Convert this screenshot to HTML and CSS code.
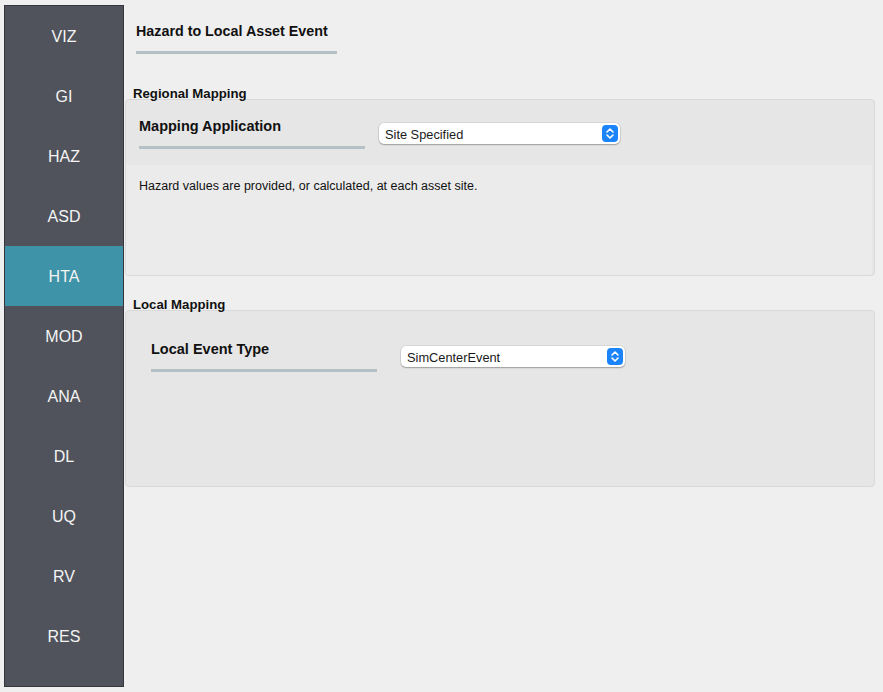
FILE: index.html
```html
<!DOCTYPE html>
<html>
<head>
<meta charset="utf-8">
<link rel="stylesheet" href="styles.css">
</head>
<body>
<div class="app">
  <nav class="sidebar">
    <div class="nav-item">VIZ</div>
    <div class="nav-item">GI</div>
    <div class="nav-item">HAZ</div>
    <div class="nav-item">ASD</div>
    <div class="nav-item active">HTA</div>
    <div class="nav-item">MOD</div>
    <div class="nav-item">ANA</div>
    <div class="nav-item">DL</div>
    <div class="nav-item">UQ</div>
    <div class="nav-item">RV</div>
    <div class="nav-item">RES</div>
  </nav>
  <main class="main">
    <div class="page-title">
      <div class="heading title-text">Hazard to Local Asset Event</div>
      <div class="bar title-bar"></div>
    </div>

    <div class="group regional">
      <div class="group-label">Regional Mapping</div>
      <div class="group-box">
        <div class="box-top">
          <div class="field">
            <div class="heading">Mapping Application</div>
            <div class="bar field-bar"></div>
          </div>
          <div class="combo combo-site">
            <span class="combo-text">Site Specified</span>
            <span class="stepper">
              <svg width="16" height="17" viewBox="0 0 16 17"><path d="M5 7 L8 4 L11 7 M5 10 L8 13 L11 10" fill="none" stroke="#fff" stroke-width="1.6" stroke-linecap="round" stroke-linejoin="round"/></svg>
            </span>
          </div>
        </div>
        <div class="box-bottom">
          <p class="desc">Hazard values are provided, or calculated, at each asset site.</p>
        </div>
      </div>
    </div>

    <div class="group local">
      <div class="group-label">Local Mapping</div>
      <div class="group-box local-box">
        <div class="local-row">
          <div class="field">
            <div class="heading">Local Event Type</div>
            <div class="bar field-bar"></div>
          </div>
          <div class="combo combo-event">
            <span class="combo-text">SimCenterEvent</span>
            <span class="stepper">
              <svg width="16" height="17" viewBox="0 0 16 17"><path d="M5 7 L8 4 L11 7 M5 10 L8 13 L11 10" fill="none" stroke="#fff" stroke-width="1.6" stroke-linecap="round" stroke-linejoin="round"/></svg>
            </span>
          </div>
        </div>
      </div>
    </div>
  </main>
</div>
</body>
</html>
```

FILE: styles.css
```css
* { box-sizing: border-box; }
html, body {
  margin: 0;
  padding: 0;
  background: #efefef;
  font-family: "Liberation Sans", Arial, sans-serif;
  color: #111;
}
.app {
  display: flex;
  align-items: flex-start;
  width: 883px;
  height: 692px;
}
.sidebar {
  margin: 5px 0 0 4px;
  width: 120px;
  height: 682px;
  background: #50535b;
  border: 1px solid #35373b;
  display: flex;
  flex-direction: column;
}
.nav-item {
  height: 60px;
  flex: none;
  display: flex;
  align-items: center;
  justify-content: center;
  padding-top: 2px;
  color: #f4f4f4;
  font-size: 16px;
}
.nav-item.active {
  background: #3f93a8;
}
.main {
  flex: none;
  width: 750px;
  margin-left: 1px;
  display: flex;
  flex-direction: column;
}
.heading {
  font-weight: bold;
  font-size: 14.5px;
  line-height: 16px;
  color: #111;
}
.title-text {
  font-size: 14.3px;
}
.bar {
  height: 3px;
  background: #b5c0c6;
}
.page-title {
  padding: 23px 0 0 11px;
}
.title-bar {
  width: 201px;
  margin-top: 12px;
}
.group-label {
  font-weight: bold;
  font-size: 13.2px;
  line-height: 14px;
  padding-left: 8px;
  color: #111;
}
.regional {
  margin-top: 33px;
}
.group-box {
  width: 750px;
  background: #e6e6e6;
  border: 1px solid #d9d9d9;
  border-radius: 4px;
  margin-top: -2px;
}
.regional .group-box {
  height: 177px;
  display: flex;
  flex-direction: column;
}
.box-top {
  height: 65px;
  display: flex;
  align-items: flex-start;
  padding: 18px 0 0 13px;
}
.field {
  width: 226px;
}
.field-bar {
  margin-top: 12px;
}
.box-bottom {
  flex: 1;
  background: #ebebeb;
  margin-right: 2px;
  border-radius: 0 0 3px 3px;
  padding: 14px 0 0 13px;
}
.desc {
  margin: 0;
  font-size: 12.5px;
  line-height: 14px;
  color: #111;
}
.combo {
  height: 21px;
  background: #fff;
  border-radius: 5px;
  box-shadow: 0 0 0 0.5px rgba(0,0,0,0.12), 0 1px 1.5px rgba(0,0,0,0.28);
  display: flex;
  align-items: center;
  justify-content: space-between;
  padding: 0 2px 0 6px;
}
.combo-text {
  font-size: 12.8px;
  color: #1a1a1a;
  padding-top: 1px;
}
.stepper {
  width: 16px;
  height: 17px;
  background: #1b84fb;
  border-radius: 4px;
  display: flex;
}
.combo-site {
  width: 241px;
  margin: 5px 0 0 14px;
}
.local {
  margin-top: 22px;
}
.local-box {
  height: 177px;
}
.local-row {
  display: flex;
  align-items: flex-start;
  padding: 30px 0 0 25px;
}
.combo-event {
  width: 224px;
  margin: 5px 0 0 24px;
}
```
